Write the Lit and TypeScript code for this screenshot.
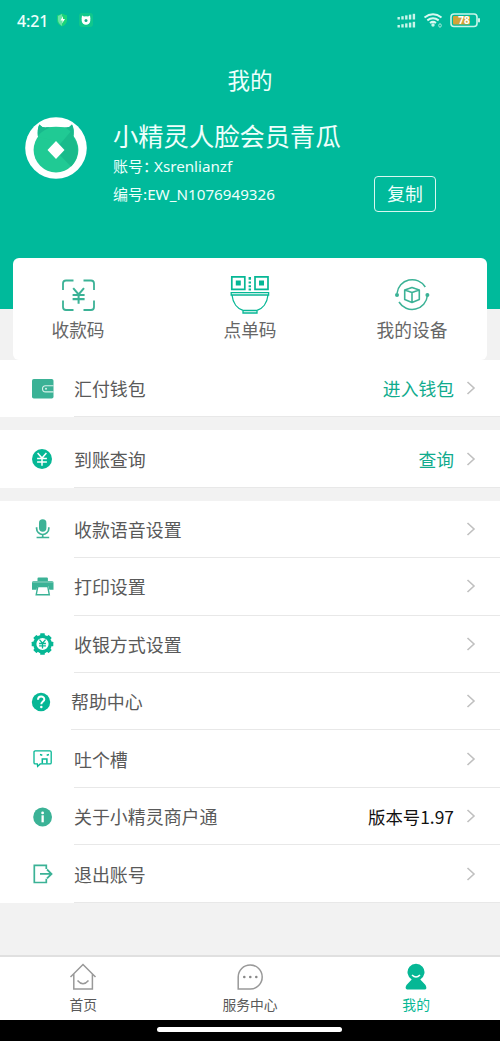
import { LitElement, html, svg, css } from "lit";
import { customElement } from "lit/decorators.js";
import { classMap } from "lit/directives/class-map.js";

const G = "#3bb296";
const T = "#06b795";

const yen = (x: number, y: number, s: number, c: string, w: number) => svg`
  <g transform="translate(${x} ${y}) scale(${s})" fill="none" stroke=${c} stroke-width=${w}>
    <path d="M-4.5-6L0-.8 4.5-6M0-.8V7M-5-.3H5M-5 3.2H5"/></g>`;

const icons: Record<string, unknown> = {
  wallet: svg`<rect x="2" y="4" width="21.5" height="19.5" rx="1.8" fill=${G}/>
    <path d="M23.5 10.7H15.6a3.1 3.1 0 0 0 0 6.2H23.5" fill="none" stroke="#d8f1ea" stroke-width="1.1"/><circle cx="16" cy="13.8" r="1" fill="#d8f1ea"/>`,
  yen: svg`<circle cx="12" cy="14" r="10" fill=${T}/>${yen(12, 13.8, 0.98, "#fff", 1.5)}`,
  mic: svg`<rect x="9" y="4.2" width="7.4" height="12.6" rx="3.7" fill=${G}/>
    <path d="M6.6 12.2v1.2a6.1 6.1 0 0 0 12.2 0v-1.2M12.7 19.5v2.6M6.6 22.5h12.6" fill="none" stroke=${G} stroke-width="1.7"/>`,
  print: svg`<path d="M7.5 8V5.6a1 1 0 0 1 1-1h8.4a1 1 0 0 1 1 1V8H22a1.5 1.5 0 0 1 1.5 1.5v7.2h-4.2l-.8-3.5H7.3l-.8 3.5H2V9.5A1.5 1.5 0 0 1 3.5 8Z" fill=${G}/>
    <path d="M2.3 9h20.9" stroke="#d2ebe4" stroke-width=".6"/>
    <path d="M7.8 13.6h10l1.5 8.2H6.2Z" fill="#fff" stroke=${G} stroke-width="1.4"/>`,
  gear: svg`<circle cx="12.5" cy="14" r="7.7" fill="none" stroke=${T} stroke-width="3.2"/>
    ${[0, 45, 90, 135, 180, 225, 270, 315].map((a) => svg`<rect x="10.2" y="3.2" width="4.6" height="4" rx=".6" fill=${T} transform="rotate(${a} 12.5 14)"/>`)}
    ${yen(12.5, 13.7, 0.68, T, 1.9)}`,
  help: svg`<circle cx="11" cy="14" r="9.2" fill=${T}/>
    <path d="M8 11.8c0-4.4 6.4-4.1 6.3-.4 0 2.1-3 2.3-3 4.8" fill="none" stroke="#fff" stroke-width="2"/><circle cx="11.3" cy="18.9" r="1.25" fill="#fff"/>`,
  chat: svg`<path d="M7.3 18.9H5.2a1.2 1.2 0 0 1-1.2-1.2V7.1a1.2 1.2 0 0 1 1.2-1.2H20a1.2 1.2 0 0 1 1.2 1.2v10.6a1.2 1.2 0 0 1-1.2 1.2H10.2L7.6 21.3Z" fill="none" stroke=${T} stroke-width="1.3"/>
    <path d="M12.3 18.4v-4.4h4.6v4.4" fill="none" stroke=${T} stroke-width="1.5"/>
    <path d="M10 9.6l2.3.6M19 9.6l-2.3.6" stroke=${T} stroke-width="1.5"/>`,
  info: svg`<circle cx="12.6" cy="14" r="9.4" fill=${G}/><circle cx="12.6" cy="9.9" r="1.4" fill="#fff"/>
    <rect x="11.5" y="12.3" width="2.3" height="7" fill="#fff"/>`,
  exit: svg`<path d="M16.3 9V5.3H4.3v17.2h12v-3.7" fill="none" stroke=${G} stroke-width="1.7"/>
    <path d="M10 13.9h11M17 9.5l4.5 4.4L17 18.3" fill="none" stroke=${G} stroke-width="1.8"/>`,
};

interface Row { icon: string; label: string; value?: string; dark?: boolean; near?: boolean }
const groups: Row[][] = [
  [{ icon: "wallet", label: "汇付钱包", value: "进入钱包" }],
  [{ icon: "yen", label: "到账查询", value: "查询" }],
  [
    { icon: "mic", label: "收款语音设置" },
    { icon: "print", label: "打印设置" },
    { icon: "gear", label: "收银方式设置" },
    { icon: "help", label: "帮助中心", near: true },
    { icon: "chat", label: "吐个槽" },
    { icon: "info", label: "关于小精灵商户通", value: "版本号1.97", dark: true },
    { icon: "exit", label: "退出账号" },
  ],
];

const scanIcon = svg`<g fill="none" stroke=${G} stroke-width="1.8">
  <path d="M5 15V8.5a3 3 0 0 1 3-3h7.5M25.5 5.5H33a3 3 0 0 1 3 3V15M36 25.5V32a3 3 0 0 1-3 3H25.5M15.5 35H8a3 3 0 0 1-3-3V25.5"/></g>
  ${yen(20.6, 20.3, 1.2, G, 1.7)}`;

const bowlIcon = svg`<g fill="none" stroke=${T}>
  <path d="M1.8 1.8h13v12.5h-13ZM25 1.8h13v12.5H25Z" stroke-width="1.7"/>
  <path d="M1.2 17.6H38.6V20H1.2ZM2 20c.8 8 5.5 13.5 11 15.4v2.6h14v-2.6c5.5-1.9 10.2-7.4 11-15.4M13 35.5h14" stroke-width="1.3"/></g>
  <path d="M5.8 5.6h5v5h-5ZM29 5.6h5v5h-5ZM18.6 2h2.4v2.8h-2.4ZM18.6 6.6h2.4v1.8h-2.4ZM18.6 10.2h2.4v2h-2.4ZM18.6 13.6h2.4v2h-2.4Z" fill=${T}/>`;

const deviceIcon = svg`<g fill="none" stroke=${G} stroke-width="1.5">
  <path d="M5 18.5A15.3 15.3 0 0 1 33.3 12M35.4 20.5A15.3 15.3 0 0 1 7 27"/>
  <path d="M20 12.5l7.3 2.6v9.5L20 27.5l-7.3-2.9v-9.5ZM12.7 15.1L20 17.6l7.3-2.5M20 17.6v9.9" stroke-width="1.6" stroke-linejoin="round"/></g>
  <circle cx="5" cy="20" r="2" fill=${G}/><circle cx="35.4" cy="20" r="2" fill=${G}/>`;

@customElement("app-root")
export class AppRoot extends LitElement {
  static styles = css`
    :host { display: flex; flex-direction: column; width: 500px; height: 1041px; overflow: hidden; background: #f2f2f2;
      font-family: "Noto Sans CJK SC", sans-serif; color: #595959; }
    * { box-sizing: border-box; }
    svg { display: block; flex: none; }
    .header { height: 309px; flex: none; background: #00ba9b; color: #eefffb; }
    .status { height: 40px; display: flex; align-items: center; padding: 0 18px 0 17px; }
    .clock { font: 500 16px/20px "Noto Sans", sans-serif; width: 37px; padding-top: 1px; letter-spacing: -.1px; white-space: nowrap; }
    .grow { flex: 1; }
    .title { height: 78px; line-height: 78px; text-align: center; font-size: 22.5px; }
    .profile { display: flex; padding-left: 25px; }
    .avatar { margin-top: -1px; }
    .who { margin-left: 26px; width: 261px; white-space: nowrap; }
    .name { font-size: 25.3px; line-height: 34px; }
    .line { font-size: 15px; line-height: 28px; height: 28px; }
    .latin { font-family: "Noto Sans", sans-serif; font-size: 15.2px; }
    .user { margin-left: -4px; }
    .copy { margin-top: 58px; width: 62px; height: 36px; border: 1.5px solid #d9f7f0; border-radius: 4px; text-align: center; font-size: 17.8px; line-height: 33px; }
    .card { position: relative; z-index: 1; margin: -51px 13px 0; height: 102px; flex: none; background: #fff; border-radius: 6px;
      display: grid; grid-template-columns: 130px 1fr 150px; justify-items: center; padding-top: 17px; font-size: 17.7px; line-height: 26px; color: #666; }
    .act { display: flex; flex-direction: column; align-items: center; gap: 1px; }
    .mid { margin-left: 20px; }
    .group { background: #fff; margin-bottom: 12.9px; }
    .row { height: 57.45px; display: flex; padding-left: 30px; }
    .ico { align-self: center; }
    .body { flex: 1; display: flex; align-items: center; margin-left: 16px; border-bottom: 1px solid #e8e8e8; font-size: 17.95px; padding-right: 22px; }
    .near { margin-left: 13px; }
    .value { color: #10ab8d; margin-right: 10px; font-size: 17.8px; }
    .dark { color: #111; font-size: 17.4px; }
    .tabs { margin-top: auto; height: 65px; flex: none; display: grid; grid-template-columns: repeat(3, 1fr); background: #fff; border-top: 2px solid #e0e0e0; }
    .tab { display: flex; flex-direction: column; align-items: center; font-size: 13.8px; line-height: 20px; padding-top: 4px; gap: 1px; }
    .on { color: #06b795; margin-right: 1px; }
    .nav { height: 21px; flex: none; background: #000; display: flex; justify-content: center; padding: 7px 1px 0 0; }
    .pill { width: 185px; height: 5px; border-radius: 3px; background: #fff; }
  `;

  private row(r: Row) {
    return html`<div class="row">
      <svg class="ico" width="28" height="28" viewBox="0 0 28 28">${icons[r.icon]}</svg>
      <div class=${classMap({ body: true, near: !!r.near })}>
        <span>${r.label}</span><span class="grow"></span>
        ${r.value ? html`<span class=${classMap({ value: true, dark: !!r.dark })}>${r.value}</span>` : ""}
        <svg width="14" height="18" viewBox="0 0 14 18"><path d="M3.5 3L10 9 3.5 15" fill="none" stroke="#c0c0c0" stroke-width="1.6"/></svg>
      </div></div>`;
  }

  render() {
    return html`
      <div class="header">
        <div class="status">
          <span class="clock">4:21</span>
          <svg width="42" height="16" viewBox="0 0 42 16">
            <path d="M8 1.5q3 1.8 5 1.7v4.8q0 4-5 6.5-5-2.5-5-6.5V3.2q2 .1 5-1.7" fill="#1bd578"/>
            <path d="M8 2v12Q4 11 4 8V4Z" fill="#6be3a7"/><path d="M9 4L6.5 8.5h2L8 11.5l3-4.5H9Z" fill="#fff"/>
            <rect x="25" y="1" width="14" height="14" rx="3" fill="#10c78c"/>
            <circle cx="32" cy="8.5" r="4.3" fill="#fff"/><path d="M28 3.5l3 1.5h2l3-1.5.5 4h-9Z" fill="#fff"/><circle cx="32" cy="8.5" r="1.5" fill="#12ad89"/>
          </svg>
          <span class="grow"></span>
          <svg width="86" height="20" viewBox="0 0 86 20">
            <g fill="#c9f5ea">
              ${[0, 1, 2, 3, 4].map((i) => svg`<rect x=${1.5 + i * 3.8} y=${7 - i * 0.8} width="2.4" height=${2.5 + i * 0.8}/><rect x=${1.5 + i * 3.8} y=${15 - i * 0.8} width="2.4" height=${2.5 + i * 0.8}/>`)}
              <circle cx="37" cy="15" r="1.7"/>
            </g>
            <path d="M28.5 7.5q8.5-6.5 17 0M31.3 10.4q5.7-4.2 11.4 0M34 13q3-2.3 6 0" fill="none" stroke="#d9f9f1" stroke-width="2"/>
            <ellipse cx="44" cy="15.5" rx="1.3" ry="1.7" fill="none" stroke="#a9ecdc"/>
            <rect x="55" y="4" width="26" height="12.5" rx="3" fill="none" stroke="#c9f5ea" stroke-width="1.6"/>
            <rect x="57" y="6" width="17" height="8.5" rx="1" fill="#d3a338"/><rect x="82" y="8" width="2" height="4.5" rx="1" fill="#c9f5ea"/>
            <text x="68" y="14" text-anchor="middle" font-family="Noto Sans" font-size="10" font-weight="700" fill="#fff">78</text>
          </svg>
        </div>
        <div class="title">我的</div>
        <div class="profile">
          <svg class="avatar" width="62" height="62" viewBox="0 0 62 62">
            <circle cx="31" cy="31" r="30.8" fill="#fff"/>
            <circle cx="31" cy="33" r="22.4" fill="#20ca94"/>
            <path d="M14.3 7.5Q17 11 22 10.3 31 9 40 10.3 44.5 11 47 7.5 49.5 12 48.5 20L31 24 13 20Q12 12 14.3 7.5Z" fill="#20ca94"/>
            <path d="M47 13L49 21.5A22.4 22.4 0 0 1 46 49.6L30 33Z" fill="#19bb8b"/>
            <path d="M14.3 7.5Q17 11 22 10.3L25 10.5Q17 13.5 12.8 19 12.3 12 14.3 7.5ZM47 7.5Q44.5 11 40 10.3 45 13 48.5 18.5 49.3 12 47 7.5Z" fill="#19b88d"/>
            <path d="M31 24l8.5 9-8.5 9-8.5-9Z" fill="#fff"/>
          </svg>
          <div class="who"><div class="name">小精灵人脸会员青瓜</div><div class="line">账号：<span class="latin user">Xsrenlianzf</span></div><div class="line">编号:<span class="latin">EW_N1076949326</span></div></div>
          <div class="copy">复制</div>
        </div>
      </div>
      <div class="card">
        <div class="act"><svg width="40" height="40" viewBox="0 0 40 40">${scanIcon}</svg>收款码</div>
        <div class="act mid"><svg width="40" height="40" viewBox="0 0 40 40">${bowlIcon}</svg>点单码</div>
        <div class="act"><svg width="40" height="40" viewBox="0 0 40 40">${deviceIcon}</svg>我的设备</div>
      </div>
      ${groups.map((g) => html`<div class="group">${g.map((r) => this.row(r))}</div>`)}
      <div class="tabs">
        <div class="tab"><svg width="32" height="32" viewBox="0 0 32 32"><path d="M3.5 16L16 3.5 28.5 16M6.8 13v15h18.6V13M10.5 19.5q5.5 6.5 11 0" fill="none" stroke="#999" stroke-width="1.5"/></svg>首页</div>
        <div class="tab"><svg width="32" height="32" viewBox="0 0 32 32"><path d="M4.2 28V16A12 12 0 1 1 16.2 28Z" fill="none" stroke="#999" stroke-width="1.5"/><g fill="#888"><circle cx="10.3" cy="16" r="1.3"/><circle cx="16.3" cy="16" r="1.3"/><circle cx="22.3" cy="16" r="1.3"/></g></svg>服务中心</div>
        <div class="tab on"><svg width="32" height="32" viewBox="0 0 32 32"><path d="M11.7 18.5A8.5 8.5 0 1 1 20.3 18.5L25.5 24q2 4.5-.5 4.5H7Q4.5 28 6.5 24Z" fill="#06b795"/><path d="M12 14q4 4 8 0" fill="none" stroke="#fff" stroke-width="1.5"/></svg>我的</div>
      </div>
      <div class="nav"><div class="pill"></div></div>`;
  }
}
